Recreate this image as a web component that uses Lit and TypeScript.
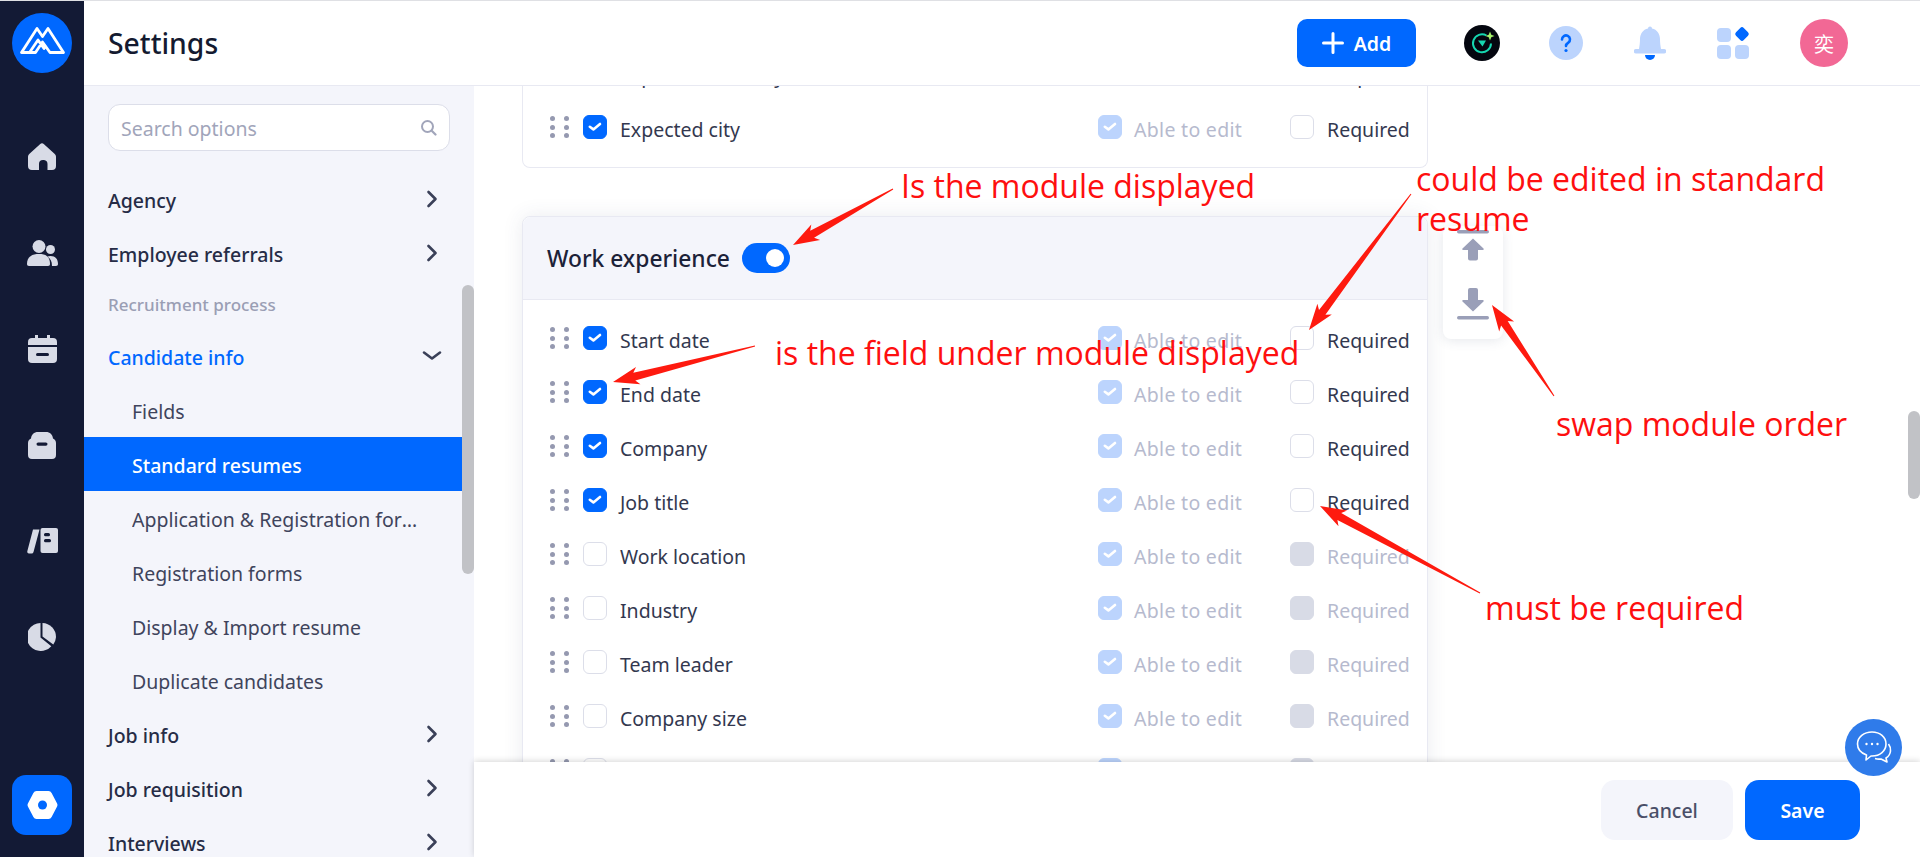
import {LitElement, html, css, svg} from "lit";
import {customElement} from "lit/decorators.js";

type Field = {label: string; on: boolean; locked?: boolean; must?: boolean};

const fields: Field[] = [
  {label: "Start date", on: true},
  {label: "End date", on: true},
  {label: "Company", on: true},
  {label: "Job title", on: true},
  {label: "Work location", on: false, locked: true},
  {label: "Industry", on: false, locked: true},
  {label: "Team leader", on: false, locked: true},
  {label: "Company size", on: false, locked: true},
  {label: "Company type", on: false, locked: true},
];

const notes = [
  {text: "Is the module displayed", x: 901, y: 164},
  {text: "could be edited in standard", x: 1416, y: 157},
  {text: "resume", x: 1416, y: 197},
  {text: "is the field under module displayed", x: 775, y: 331},
  {text: "swap module order", x: 1556, y: 402},
  {text: "must be required", x: 1485, y: 586},
];

// tail x, tail y, tip x, tip y
const arrows = [
  [893, 189, 793, 245],
  [755, 346, 613, 382],
  [1411, 194, 1309, 330],
  [1554, 396, 1492, 305],
  [1480, 593, 1320, 506],
];

function arrowPoints([x1, y1, x2, y2]: number[]) {
  const len = Math.hypot(x2 - x1, y2 - y1);
  const ux = (x2 - x1) / len, uy = (y2 - y1) / len;
  const nx = -uy, ny = ux;
  const at = (back: number, side: number) =>
    `${(x2 - ux * back + nx * side).toFixed(1)},${(y2 - uy * back + ny * side).toFixed(1)}`;
  return [
    `${x1 + nx * 0.5},${y1 + ny * 0.5}`,
    at(22, 4), at(26, 9), at(0, 0), at(26, -9), at(22, -4),
    `${x1 - nx * 0.5},${y1 - ny * 0.5}`,
  ].join(" ");
}

const chevronRight = html`<svg class="chev" width="14" height="20" viewBox="0 0 14 20"><path d="M3.5 3l7 7-7 7" fill="none" stroke="#3a4058" stroke-width="2.6" stroke-linecap="round" stroke-linejoin="round"/></svg>`;
const chevronDown = html`<svg class="chev" width="20" height="14" viewBox="0 0 20 14"><path d="M2 3.5l8 6 8-6" fill="none" stroke="#3a4058" stroke-width="2.6" stroke-linecap="round" stroke-linejoin="round"/></svg>`;

const check = html`<svg width="24" height="24" viewBox="0 0 24 24"><path d="M6.800 11.800l3.600 2.600L17 9" fill="none" stroke="#fff" stroke-width="2.600" stroke-linecap="round" stroke-linejoin="round"/></svg>`;

@customElement("app-root")
export class AppRoot extends LitElement {
  static styles = css`
    :host {
      display: block;
      position: relative;
      width: 1920px;
      height: 857px;
      overflow: hidden;
      background: #fff;
      font-family: "Noto Sans", "Noto Sans CJK SC", sans-serif;
      font-size: 19.5px;
      color: #33384f;
    }
    .page { display: flex; height: 856px; border-top: 1px solid #dfe0e4; }

    .rail { width: 84px; flex: none; background: #131a35; display: flex; flex-direction: column; align-items: center; }
    .logo { margin-top: 12px; margin-bottom: 36px; }
    .rail-item { height: 96px; display: flex; align-items: center; justify-content: center; }
    .rail-active { margin-top: auto; margin-bottom: 22px; width: 60px; height: 60px; border-radius: 14px; background: #0068ff; display: flex; align-items: center; justify-content: center; }

    .right { flex: 1; display: flex; flex-direction: column; min-width: 0; }
    .top { height: 84px; flex: none; border-bottom: 1px solid #e8e9f2; display: flex; align-items: center; padding: 0 72px 0 24px; }
    .title { font-size: 28.3px; font-weight: 500; color: #141a30; flex: 1; }
    .add { width: 119px; height: 48px; border: 0; border-radius: 10px; background: #0068ff; color: #fff; font: 600 19.5px "Noto Sans", sans-serif; display: flex; align-items: center; justify-content: center; gap: 10px; margin-right: 24px; }
    .slot { width: 84px; display: flex; justify-content: center; align-items: center; }
    .avatar { width: 48px; height: 48px; border-radius: 50%; background: #f26895; color: #fff; font-size: 20px; display: flex; align-items: center; justify-content: center; margin-left: 24px; }

    .body { flex: 1; display: flex; position: relative; overflow: hidden; }

    .side { width: 390px; flex: none; background: #f4f5fb; position: relative; overflow: hidden; }
    .search { margin: 18px 0 21px 24px; width: 342px; height: 47px; box-sizing: border-box; border: 1px solid #dcdee9; border-radius: 12px; background: #fff; display: flex; align-items: center; justify-content: space-between; padding: 2px 12px 0 12px; color: #a1a5ba; }
    .search svg { margin-top: -3px; }
    .item { width: 378px; height: 54px; box-sizing: border-box; padding: 2px 23px 0 24px; display: flex; align-items: center; justify-content: space-between; font-weight: 500; color: #262c46; }
    .item .chev { margin-top: -2px; }
    .item.open { color: #0068ff; }
    .item.open .chev { margin-right: -3px; }
    .group { height: 49px; padding-left: 24px; display: flex; align-items: center; font-size: 17px; font-weight: 500; color: #9a9eb4; }
    .sub { width: 378px; height: 54px; box-sizing: border-box; padding: 2px 0 0 48px; display: flex; align-items: center; color: #3f445c; }
    .sub span { max-width: 294px; overflow: hidden; white-space: nowrap; text-overflow: ellipsis; }
    .sub.active { background: #0068ff; color: #fff; font-weight: 500; }
    .bar { position: absolute; width: 12px; border-radius: 6px; background: #c1c2c6; }
    .side .bar { left: 378px; top: 199px; height: 289px; }
    .body > .bar { right: 0; top: 325px; height: 88px; }

    .main { flex: 1; overflow: hidden; padding: 0 0 0 48px; }
    .card { width: 906px; box-sizing: border-box; background: #fff; border: 1px solid #e8e9f2; position: relative; }
    .card.first { margin-top: -52px; border-top: 0; border-radius: 0 0 8px 8px; padding: 12px 0 13px; margin-bottom: 48px; }
    .card.current { border-radius: 8px 8px 0 0; box-shadow: 0 0 20px rgba(60, 70, 110, .1); padding-bottom: 12px; }
    .card-head { height: 83px; box-sizing: border-box; background: #f4f5fb; border-bottom: 1px solid #e8e9f2; border-radius: 8px 8px 0 0; display: flex; align-items: center; padding-left: 24px; gap: 12px; font-size: 22.8px; font-weight: 500; color: #1c2238; margin-bottom: 11px; }
    .toggle { width: 48px; height: 30px; border-radius: 15px; background: #0068ff; position: relative; }
    .toggle::after { content: ""; position: absolute; left: 24px; top: 6px; width: 18px; height: 18px; border-radius: 50%; background: #fff; }

    .row { height: 54px; display: flex; align-items: center; position: relative; }
    .dots { margin-left: 27px; width: 19px; display: grid; grid-template-columns: 5px 5px; justify-content: space-between; gap: 3.5px 9px; }
    .dots i { width: 5px; height: 5px; border-radius: 50%; background: #9599b0; }
    .box { width: 24px; height: 24px; box-sizing: border-box; border-radius: 6px; border: 1px solid #dcdee9; background: #fff; flex: none; }
    .box.on { background: #0068ff; border-color: #0068ff; }
    .box.soft { background: #bcd4fd; border-color: #bcd4fd; }
    .box.off { background: #d8dbe6; border-color: #d8dbe6; }
    .box svg { display: block; margin: -1px; }
    .row .box.pick { margin-left: 14px; }
    .row .name { margin-left: 13px; width: 478px; }
    .row .name, .row .edit, .row .req { position: relative; top: 2px; }
    .row .edit { margin-left: 12px; width: 156px; color: #b6bace; letter-spacing: .3px; }
    .row .req { margin-left: 13px; }
    .row .req.dim { color: #b6bace; }

    .tools { position: absolute; left: calc(100% + 16px); top: 9px; width: 60px; height: 113px; box-sizing: border-box; background: #fff; border-radius: 8px; box-shadow: 0 2px 12px rgba(60, 70, 110, .12); display: flex; flex-direction: column; align-items: center; padding-top: 4px; gap: 26px; }

    .wm { position: absolute; z-index: 1; left: -42px; top: -88px; width: 2448px; display: flex; flex-wrap: wrap; pointer-events: none; }
    .wm div { width: 306px; height: 150px; display: flex; flex-direction: column; align-items: center; justify-content: center; font-size: 19px; line-height: 24px; color: rgba(30, 40, 80, .018); white-space: nowrap; transform: rotate(-30deg); }

    .foot { position: absolute; z-index: 2; left: 390px; right: 0; bottom: 0; height: 95px; background: #fff; box-shadow: 0 -1px 6px rgba(0, 0, 0, .16); display: flex; justify-content: flex-end; align-items: flex-start; gap: 12px; padding: 18px 60px 0 0; box-sizing: border-box; }
    .btn { height: 60px; border: 0; border-radius: 14px; font: 500 19.5px "Noto Sans", sans-serif; }
    .cancel { width: 132px; background: #f4f5fb; color: #4a4f68; }
    .save { width: 115px; background: #0068ff; color: #fff; font-weight: 600; }

    .chat { position: absolute; z-index: 3; left: 1845px; top: 719px; width: 57px; height: 57px; border-radius: 50%; background: #2f7bea; display: flex; align-items: center; justify-content: center; }

    .arrows { position: absolute; z-index: 4; inset: 0; pointer-events: none; }
    .note { position: absolute; z-index: 5; color: #fe0f0f; font-size: 32px; line-height: 44px; white-space: nowrap; font-family: "Open Sans", "Noto Sans", sans-serif; }
  `;

  renderRow(f: Field) {
    return html`<div class="row">
      <div class="dots">${[0, 1, 2, 3, 4, 5].map(() => html`<i></i>`)}</div>
      <div class="box pick ${f.on ? "on" : ""}">${f.on ? check : ""}</div>
      <div class="name">${f.label}</div>
      <div class="box soft">${check}</div>
      <div class="edit">Able to edit</div>
      <div class="box ${f.locked ? "off" : ""}"></div>
      <div class="req ${f.locked ? "dim" : ""}">Required</div>
    </div>`;
  }

  renderRail() {
    const c = "#d8dbe6";
    const bg = "#131a35";
    return html`<nav class="rail">
      <svg class="logo" width="60" height="60" viewBox="0 0 60 60">
        <circle cx="30" cy="30" r="30" fill="#0068ff"/>
        <path d="M9.500 39.500L25 15.500l5.500 8 5.500-8 15.500 24H38l-7.500-10.500L23.500 39.500zM17.500 39.500L26 27l6 8.500" fill="none" stroke="#fff" stroke-width="2.800" stroke-linejoin="round" stroke-linecap="round"/>
      </svg>
      <div class="rail-item"><svg width="28" height="28" viewBox="0 0 28 28"><path d="M12 1.200a3 3 0 0 1 4 0l10.500 9.600c1 .9 1.500 2 1.500 3.300V23a4 4 0 0 1-4 4h-4.500v-6a4 4 0 0 0-3.500-4h-1A4 4 0 0 0 11 21v6H4a4 4 0 0 1-4-4v-8.900c0-1.300.5-2.400 1.500-3.300z" fill="${c}"/></svg></div>
      <div class="rail-item"><svg width="31" height="26" viewBox="0 0 31 26"><circle cx="12" cy="6.500" r="6.500" fill="${c}"/><circle cx="23.500" cy="9.500" r="4.500" fill="${c}"/><path d="M0 24c0-7 4.500-10 12-10s11 3 11 10c0 1.300-.7 2-2 2H2c-1.300 0-2-.7-2-2z" fill="${c}"/><path d="M24.500 26H29c1.300 0 2-.7 2-2 0-5-2.500-8-7.500-8-1.200 0-2.200.2-3.100.5 3 2 4.600 4.800 4.600 9.500z" fill="${c}"/></svg></div>
      <div class="rail-item"><svg width="29" height="28" viewBox="0 0 29 28"><path d="M7 0h3v3h9V0h3v3h3a4 4 0 0 1 4 4v3H0V7a4 4 0 0 1 4-4h3z" fill="${c}"/><path d="M0 12h29v12a4 4 0 0 1-4 4H4a4 4 0 0 1-4-4z" fill="${c}"/><rect x="8" y="18" width="13" height="3" rx="1.500" fill="${bg}"/></svg></div>
      <div class="rail-item"><svg width="28" height="27" viewBox="0 0 28 27"><path d="M3 6.500C3.500 2.500 6 0 10 0h8c4 0 6.500 2.500 7 6.500 1.800.8 3 2.500 3 4.500v12a4 4 0 0 1-4 4H4a4 4 0 0 1-4-4V11c0-2 1.200-3.700 3-4.500z" fill="${c}"/><rect x="8.500" y="10.500" width="11" height="3.200" rx="1.600" fill="${bg}"/></svg></div>
      <div class="rail-item"><svg width="31" height="26" viewBox="0 0 31 26"><path d="M6 1.500h6.500L6.500 24a2 2 0 0 1-2 1.500H2c-1.300 0-2-1-1.700-2.200z" fill="${c}"/><rect x="13.500" y="0" width="17.500" height="25" rx="2" fill="${c}"/><rect x="17" y="5" width="6" height="3.200" rx="1.500" fill="${bg}"/><rect x="17" y="11" width="7" height="3.200" rx="1.500" fill="${bg}"/></svg></div>
      <div class="rail-item"><svg width="28" height="28" viewBox="0 0 28 28"><path d="M12.500 0v14.500l10.800 8.700A14 14 0 1 1 12.500 0z" fill="${c}"/><path d="M14.500 0a14 14 0 0 1 13.500 14 14 14 0 0 1-2.700 7.500L14.500 13.500z" fill="${c}"/></svg></div>
      <div class="rail-active"><svg width="31" height="28" viewBox="0 0 31 28"><path d="M9.500 3.500h12L27 14l-5.500 10.500h-12L4 14z" fill="#fff" stroke="#fff" stroke-width="7" stroke-linejoin="round"/><circle cx="15.500" cy="14" r="4.500" fill="#0068ff"/></svg></div>
    </nav>`;
  }

  renderTop() {
    return html`<header class="top">
      <div class="title">Settings</div>
      <button class="add"><svg width="22" height="22" viewBox="0 0 22 22"><path d="M11 1.500v19M1.500 11h19" stroke="#fff" stroke-width="3" stroke-linecap="round"/></svg>Add</button>
      <div class="slot"><svg width="36" height="36" viewBox="0 0 36 36"><circle cx="18" cy="18" r="18" fill="#04060f"/><path d="M22.500 10.500a9 9 0 1 0 4.500 8" fill="none" stroke="#16d6b0" stroke-width="2"/><path d="M14 15.500h8l-3.500 6z" fill="#16d6b0"/><path d="M26 6.500l1.300 3.200 3.200 1.300-3.200 1.300-1.300 3.200-1.300-3.200-3.200-1.300 3.200-1.300z" fill="#a4f06a"/></svg></div>
      <div class="slot"><svg width="34" height="34" viewBox="0 0 34 34"><circle cx="17" cy="17" r="17" fill="#bcd4fd"/><path d="M13 13.500a4 4 0 1 1 6.300 3.200c-1.500 1-2.300 1.700-2.300 3.300" fill="none" stroke="#0068ff" stroke-width="2.600" stroke-linecap="round"/><circle cx="17" cy="24.500" r="1.600" fill="#0068ff"/></svg></div>
      <div class="slot"><svg width="32" height="34" viewBox="0 0 32 34"><path d="M14 2.500a2 2 0 0 1 4 0C23 3.500 26 8 26 13c0 4 .5 7 1 10h3a2.200 2.200 0 0 1 0 4.500H2A2.200 2.200 0 0 1 2 23h3c.5-3 1-6 1-10 0-5 3-9.500 8-10.500z" fill="#bcd4fd"/><path d="M11 29h10a5 5 0 0 1-10 0z" fill="#0068ff"/></svg></div>
      <div class="slot"><svg width="34" height="34" viewBox="0 0 34 34"><rect x="0" y="2" width="14" height="14" rx="4" fill="#bcd4fd"/><rect x="0" y="19" width="14" height="14" rx="4" fill="#bcd4fd"/><rect x="18" y="19" width="14" height="14" rx="4" fill="#bcd4fd"/><rect x="19.500" y="2.500" width="11" height="11" rx="2.500" transform="rotate(45 25 8)" fill="#0068ff"/></svg></div>
      <div class="avatar">奕</div>
    </header>`;
  }

  renderSide() {
    const subs = ["Fields", "Standard resumes", "Application & Registration forms", "Registration forms", "Display & Import resume", "Duplicate candidates"];
    return html`<aside class="side">
      <div class="search">Search options
        <svg width="17" height="17" viewBox="0 0 17 17"><circle cx="7.500" cy="7.500" r="5.500" fill="none" stroke="#a1a5ba" stroke-width="2"/><path d="M12 12l3.500 3.500" stroke="#a1a5ba" stroke-width="2.200" stroke-linecap="round"/></svg>
      </div>
      <div class="item">Agency ${chevronRight}</div>
      <div class="item">Employee referrals ${chevronRight}</div>
      <div class="group">Recruitment process</div>
      <div class="item open">Candidate info ${chevronDown}</div>
      ${subs.map((s) => html`<div class="sub ${s === "Standard resumes" ? "active" : ""}"><span>${s}</span></div>`)}
      <div class="item">Job info ${chevronRight}</div>
      <div class="item">Job requisition ${chevronRight}</div>
      <div class="item">Interviews ${chevronRight}</div>
      <div class="bar"></div>
    </aside>`;
  }

  renderMain() {
    const tool = "#9a9fb8";
    return html`<main class="main">
      <section class="card first">
        ${this.renderRow({label: "Expected industry", on: true})}
        ${this.renderRow({label: "Expected city", on: true})}
      </section>
      <section class="card current">
        <div class="card-head">Work experience <div class="toggle"></div></div>
        ${fields.map((f) => this.renderRow(f))}
        <div class="tools">
          <svg width="32" height="32" viewBox="0 0 32 32"><rect y="0" width="32" height="3.500" rx="1.700" fill="${tool}"/><path d="M16 8.500l10.500 10c.6.700.2 1.500-.7 1.500H21v8.500a2 2 0 0 1-2 2h-6a2 2 0 0 1-2-2V20H6.200c-.9 0-1.300-.8-.7-1.500z" fill="${tool}"/></svg>
          <svg width="32" height="32" viewBox="0 0 32 32"><path d="M13 0h6a2 2 0 0 1 2 2v10h4.800c.9 0 1.300.8.7 1.500L16 23.500 5.500 13.500c-.6-.7-.2-1.500.7-1.500H11V2a2 2 0 0 1 2-2z" fill="${tool}"/><rect y="28" width="32" height="3.500" rx="1.700" fill="${tool}"/></svg>
        </div>
      </section>
    </main>`;
  }

  render() {
    return html`
      <div class="page">
        ${this.renderRail()}
        <div class="right">
          ${this.renderTop()}
          <div class="body">
            ${this.renderSide()}
            ${this.renderMain()}
            <div class="bar"></div>
            <div class="wm">${Array.from({length: 56}, () => html`<div><span>奕程 2023-11-08 15:52</span><span>huangyicheng</span></div>`)}</div>
            <footer class="foot">
              <button class="btn cancel">Cancel</button>
              <button class="btn save">Save</button>
            </footer>
          </div>
        </div>
      </div>
      <div class="chat"><svg width="40" height="40" viewBox="0 0 40 40" fill="none" stroke="#fff" stroke-width="1.600" stroke-linejoin="round"><path d="M18 4c8 0 14 5 14 12s-6 12-14 12l-1 0-5 4 .5-5C7 25 3.500 21 3.500 16 3.500 9 10 4 18 4z"/><path d="M34.500 16c1.500 2 2.300 4.500 2 7-.3 3-2 5.500-4.500 7l1 4-6-3c-2 .3-4 .2-6-.5"/><circle cx="12.500" cy="16" r="1.200" fill="#fff" stroke="none"/><circle cx="18" cy="16" r="1.200" fill="#fff" stroke="none"/><circle cx="23.500" cy="16" r="1.200" fill="#fff" stroke="none"/></svg></div>
      <svg class="arrows" width="1920" height="857" viewBox="0 0 1920 857">
        ${arrows.map((a) => svg`<polygon points="${arrowPoints(a)}" fill="#fe1a0f"/>`)}
      </svg>
      ${notes.map((n) => html`<div class="note" style="left:${n.x}px;top:${n.y}px">${n.text}</div>`)}
    `;
  }
}
